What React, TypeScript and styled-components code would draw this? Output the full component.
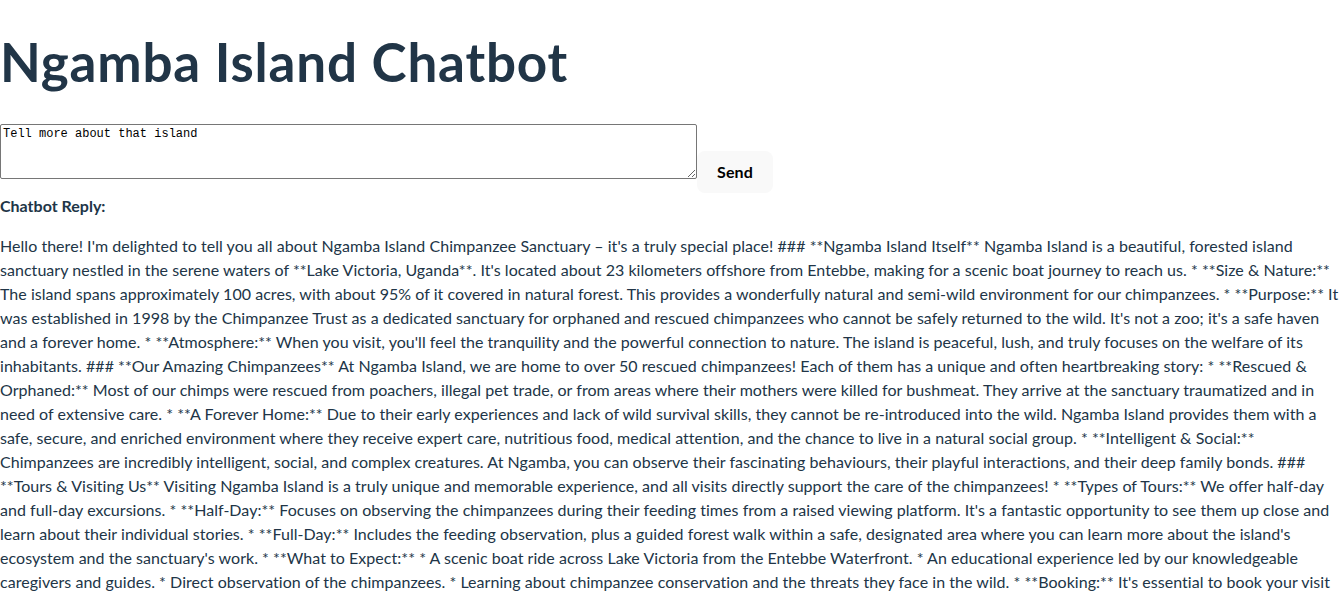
import React, { useState } from "react";
import styled, { createGlobalStyle } from "styled-components";

const GlobalStyle = createGlobalStyle`
  html, body {
    margin: 0;
    padding: 0;
    background: #ffffff;
  }
  body {
    font-family: Lato, "Noto Sans", Arial, sans-serif;
    font-size: 16px;
    line-height: 1.5;
    font-weight: 400;
    color: #213547;
    -webkit-font-smoothing: antialiased;
  }
`;

const Page = styled.div`
  display: block;
  overflow: hidden;
`;

const Title = styled.h1`
  font-size: 53px;
  line-height: 56.3px;
  font-weight: 700;
  letter-spacing: 0.8px;
  margin: 34px 0 33.3px;
  color: #213547;
`;

const InputRow = styled.div`
  display: flex;
  align-items: flex-start;
`;

const MessageBox = styled.textarea`
  box-sizing: border-box;
  width: 697px;
  height: 55px;
  margin: 0;
  padding: 2px;
  font-family: "Liberation Mono", "DejaVu Sans Mono", monospace;
  font-size: 12px;
  line-height: 15px;
  color: #000000;
  border: 1px solid #767676;
  border-radius: 2px;
  resize: both;
  background: #ffffff;
`;

const SendButton = styled.button`
  margin-top: 27px;
  height: 42px;
  padding: 0 19px;
  border-radius: 8px;
  border: 1px solid transparent;
  background-color: #f9f9f9;
  font-family: inherit;
  font-size: 16px;
  font-weight: 700;
  letter-spacing: 0.15px;
  color: #000000;
  cursor: pointer;
`;

const ReplyBlock = styled.div`
  margin-top: 1px;
`;

const ReplyLabel = styled.strong`
  display: block;
  font-weight: 700;
`;

const ReplyText = styled.p`
  margin: 16px 0 16px;
  white-space: nowrap;
  letter-spacing: 0.04px;
`;

const replyLines = [
  "Hello there! I'm delighted to tell you all about Ngamba Island Chimpanzee Sanctuary – it's a truly special place! ### **Ngamba Island Itself** Ngamba Island is a beautiful, forested island",
  "sanctuary nestled in the serene waters of **Lake Victoria, Uganda**. It's located about 23 kilometers offshore from Entebbe, making for a scenic boat journey to reach us. * **Size & Nature:**",
  "The island spans approximately 100 acres, with about 95% of it covered in natural forest. This provides a wonderfully natural and semi-wild environment for our chimpanzees. * **Purpose:** It",
  "was established in 1998 by the Chimpanzee Trust as a dedicated sanctuary for orphaned and rescued chimpanzees who cannot be safely returned to the wild. It's not a zoo; it's a safe haven",
  "and a forever home. * **Atmosphere:** When you visit, you'll feel the tranquility and the powerful connection to nature. The island is peaceful, lush, and truly focuses on the welfare of its",
  "inhabitants. ### **Our Amazing Chimpanzees** At Ngamba Island, we are home to over 50 rescued chimpanzees! Each of them has a unique and often heartbreaking story: * **Rescued &",
  "Orphaned:** Most of our chimps were rescued from poachers, illegal pet trade, or from areas where their mothers were killed for bushmeat. They arrive at the sanctuary traumatized and in",
  "need of extensive care. * **A Forever Home:** Due to their early experiences and lack of wild survival skills, they cannot be re-introduced into the wild. Ngamba Island provides them with a",
  "safe, secure, and enriched environment where they receive expert care, nutritious food, medical attention, and the chance to live in a natural social group. * **Intelligent & Social:**",
  "Chimpanzees are incredibly intelligent, social, and complex creatures. At Ngamba, you can observe their fascinating behaviours, their playful interactions, and their deep family bonds. ###",
  "**Tours & Visiting Us** Visiting Ngamba Island is a truly unique and memorable experience, and all visits directly support the care of the chimpanzees! * **Types of Tours:** We offer half-day",
  "and full-day excursions. * **Half-Day:** Focuses on observing the chimpanzees during their feeding times from a raised viewing platform. It's a fantastic opportunity to see them up close and",
  "learn about their individual stories. * **Full-Day:** Includes the feeding observation, plus a guided forest walk within a safe, designated area where you can learn more about the island's",
  "ecosystem and the sanctuary's work. * **What to Expect:** * A scenic boat ride across Lake Victoria from the Entebbe Waterfront. * An educational experience led by our knowledgeable",
  "caregivers and guides. * Direct observation of the chimpanzees. * Learning about chimpanzee conservation and the threats they face in the wild. * **Booking:** It's essential to book your visit",
  "in advance, as boat transfers and visitor numbers are carefully managed to protect the chimpanzees and their habitat. Is there anything else you'd like to know about Ngamba Island?",
];

export default function App() {
  const [message, setMessage] = useState("Tell more about that island");
  return (
    <Page>
      <GlobalStyle />
      <Title>Ngamba Island Chatbot</Title>
      <InputRow>
        <MessageBox value={message} onChange={(e) => setMessage(e.target.value)} />
        <SendButton type="button">Send</SendButton>
      </InputRow>
      <ReplyBlock>
        <ReplyLabel>Chatbot Reply:</ReplyLabel>
        <ReplyText>
          {replyLines.map((line, i) => (
            <React.Fragment key={i}>
              {line}
              {i < replyLines.length - 1 && <br />}
            </React.Fragment>
          ))}
        </ReplyText>
      </ReplyBlock>
    </Page>
  );
}
